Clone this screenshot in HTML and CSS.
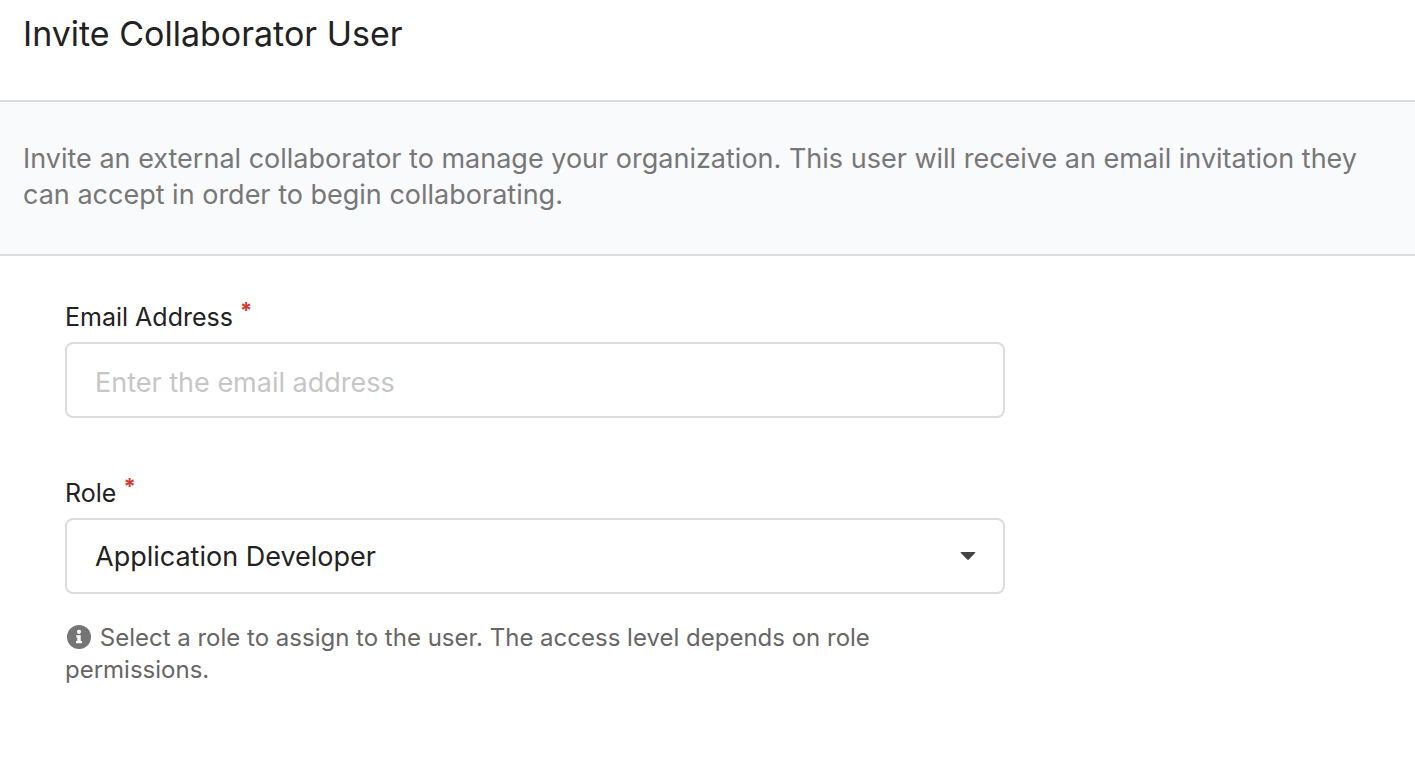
FILE: index.html
```html
<!DOCTYPE html>
<html lang="en">
<head>
<meta charset="utf-8">
<title>Invite Collaborator User</title>
<link rel="stylesheet" href="styles.css">
</head>
<body>
<header class="header"><h1 class="title">Invite Collaborator User</h1></header>
<p class="intro">Invite an external collaborator to manage your organization. This user will receive an email invitation they can accept in order to begin collaborating.</p>
<form class="form">
  <div class="field">
    <label class="label" for="email">Email Address <span class="required">*</span></label>
    <input class="control" id="email" type="email" placeholder="Enter the email address" required>
  </div>
  <div class="field">
    <label class="label" for="role">Role <span class="required">*</span></label>
    <div class="select">
      <select class="control" id="role" aria-describedby="role-help" required>
        <option>Application Developer</option>
      </select>
      <svg class="caret" viewBox="0 0 16 8" aria-hidden="true"><path d="M1.500 0h13q1.500 0 .6 1.100L9 7.200q-1 1-2 0L.9 1.100Q0 0 1.500 0z"/></svg>
    </div>
    <p class="help" id="role-help"><svg class="info" viewBox="0 0 24 24" aria-hidden="true"><circle cx="12" cy="12" r="12"/><circle class="info-mark" cx="12" cy="6.800" r="2.100"/><path class="info-mark" d="M9.300 10.200h4.400v5.800h1.300v2.200H9V16h1.300v-3.600h-1z"/></svg> Select a role to assign to the user. The access level depends on role permissions.</p>
  </div>
</form>
</body>
</html>
```
FILE: styles.css
```css
* {
  box-sizing: border-box;
}

body {
  margin: 0;
  background: #fff;
  color: #222;
  font-family: Inter, "Liberation Sans", sans-serif;
}

.header {
  padding: 12px 23px 44px;
}

.title {
  margin: 0;
  font-size: 34px;
  font-weight: 400;
  line-height: 44px;
}

.intro {
  margin: 0;
  padding: 39px 23px 41px;
  border-top: 2px solid #dcdddf;
  border-bottom: 2px solid #dcdddf;
  background: #f9fafc;
  color: #777;
  font-size: 27px;
  line-height: 36px;
}

.form {
  display: flex;
  flex-direction: column;
  gap: 57px;
  max-width: 1005px;
  padding: 43px 0 42px 65px;
}

.label {
  display: block;
  padding-bottom: 7px;
  font-size: 25px;
  line-height: 36px;
}

.required {
  color: #cf3a32;
  font-weight: 700;
  font-size: 22px;
  line-height: 1;
  vertical-align: 8px;
}

.control {
  display: block;
  width: 100%;
  height: 76px;
  padding: 0 28px;
  border: 2px solid #dcdcdc;
  border-radius: 8px;
  background: #fff;
  color: #222;
  font: inherit;
  font-size: 27px;
  appearance: none;
}

input.control {
  padding-top: 4px;
}

.control::placeholder {
  color: #c6c6c6;
  opacity: 1;
}

.select {
  display: grid;
  align-items: center;
}

.select > * {
  grid-area: 1 / 1;
}

.caret {
  justify-self: end;
  width: 16px;
  height: 8px;
  margin-right: 29px;
  fill: #444;
  pointer-events: none;
}

.help {
  margin: 0;
  padding: 28px 96px 0 0;
  color: #666;
  font-size: 24px;
  line-height: 32px;
}

.info {
  width: 24px;
  height: 24px;
  margin: 0 2px;
  vertical-align: -3px;
  fill: #757575;
}

.info-mark {
  fill: #fff;
}
```
